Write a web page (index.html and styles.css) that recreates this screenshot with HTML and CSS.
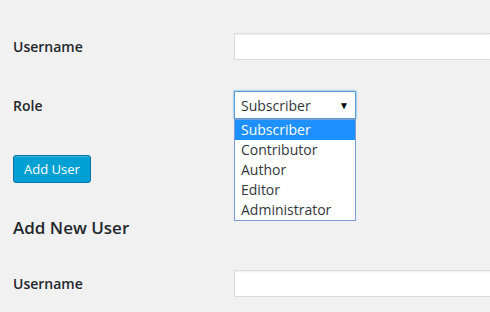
FILE: index.html
```html
<!DOCTYPE html>
<html lang="en">
<head>
    <meta charset="UTF-8">
    <meta name="viewport" content="width=device-width, initial-scale=1.0">
    <title>Add User</title>
    <link rel="stylesheet" href="styles.css">
</head>
<body>
    <div class="wrap">
        <div class="row first">
            <label for="username">Username</label>
            <input type="text" id="username" class="regular-text">
        </div>
        <div class="row role-row">
            <label>Role</label>
            <div class="select-wrap">
                <div class="select">
                    <span>Subscriber</span>
                    <span class="arrow">&#9660;</span>
                </div>
                <ul class="options">
                    <li class="active">Subscriber</li>
                    <li>Contributor</li>
                    <li>Author</li>
                    <li>Editor</li>
                    <li>Administrator</li>
                </ul>
            </div>
        </div>
        <button class="button-primary">Add User</button>
        <h2>Add New User</h2>
        <div class="row">
            <label for="new-username">Username</label>
            <input type="text" id="new-username" class="regular-text">
        </div>
    </div>
</body>
</html>
```

FILE: styles.css
```css
body {
    margin: 0;
    padding: 0;
    background-color: #f1f1f1;
    font-family: "Open Sans", sans-serif;
    color: #23282d;
}

.wrap {
    padding-left: 13px;
    padding-top: 32px;
    overflow: hidden;
}

.row {
    display: flex;
    align-items: center;
    height: 28px;
}

.row label {
    width: 221px;
    flex-shrink: 0;
    font-size: 14px;
    font-weight: 600;
}

.role-row {
    margin-top: 31px;
}

.regular-text {
    box-sizing: border-box;
    flex: 1;
    min-width: 0;
    height: 27px;
    margin: 0 -2px 0 0;
    padding: 3px 5px;
    border: 1px solid #ddd;
    background-color: #fff;
    box-shadow: inset 0 1px 2px rgba(0, 0, 0, 0.07);
    font-family: inherit;
    font-size: 14px;
}

.select-wrap {
    position: relative;
}

.select {
    box-sizing: border-box;
    width: 122px;
    height: 28px;
    padding: 0 6px;
    display: flex;
    align-items: center;
    justify-content: space-between;
    background-color: #fff;
    border: 1px solid #5b9dd9;
    box-shadow: 0 0 2px rgba(30, 140, 190, 0.8);
    font-size: 14px;
    color: #32373c;
}

.arrow {
    font-size: 10px;
    color: #000;
    margin-right: 0;
}

.options {
    position: absolute;
    top: 28px;
    left: 0;
    box-sizing: border-box;
    width: 122px;
    margin: 0;
    padding: 0;
    list-style: none;
    background-color: #fff;
    border: 1px solid #7a9cd3;
    font-size: 14px;
    color: #32373c;
}

.options li {
    height: 20px;
    line-height: 20px;
    padding-left: 6px;
}

.options li.active {
    background-color: #1e90ff;
    color: #fff;
}

.button-primary {
    display: block;
    margin-top: 36px;
    height: 28px;
    width: 78px;
    padding: 0 10px;
    background-color: #00a0d2;
    border: 1px solid #0073aa;
    border-radius: 3px;
    box-shadow: inset 0 1px 0 rgba(120, 200, 230, 0.5);
    color: #fff;
    font-family: inherit;
    font-size: 13px;
}

h2 {
    margin: 33px 0 0;
    font-size: 17px;
    font-weight: 600;
    line-height: 24px;
}

h2 + .row {
    margin-top: 29px;
}
```
